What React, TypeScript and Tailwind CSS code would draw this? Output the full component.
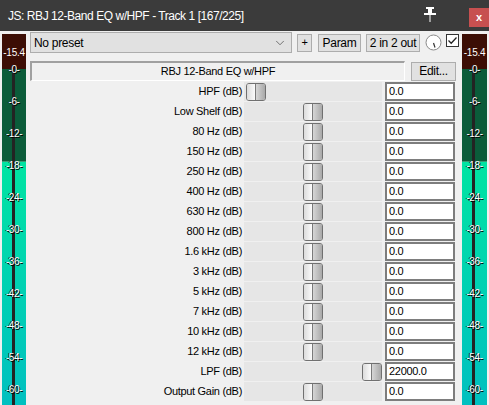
import { ChevronDown } from "lucide-react";

const marks = ["-0-", "-6-", "-12-", "-18-", "-24-", "-30-", "-36-", "-42-", "-48-", "-54-", "-60-"];

type Pos = "left" | "center" | "right";

const rows: { label: string; value: string; pos: Pos }[] = [
  { label: "HPF (dB)", value: "0.0", pos: "left" },
  { label: "Low Shelf (dB)", value: "0.0", pos: "center" },
  { label: "80 Hz (dB)", value: "0.0", pos: "center" },
  { label: "150 Hz (dB)", value: "0.0", pos: "center" },
  { label: "250 Hz (dB)", value: "0.0", pos: "center" },
  { label: "400 Hz (dB)", value: "0.0", pos: "center" },
  { label: "630 Hz (dB)", value: "0.0", pos: "center" },
  { label: "800 Hz (dB)", value: "0.0", pos: "center" },
  { label: "1.6 kHz (dB)", value: "0.0", pos: "center" },
  { label: "3 kHz (dB)", value: "0.0", pos: "center" },
  { label: "5 kHz (dB)", value: "0.0", pos: "center" },
  { label: "7 kHz (dB)", value: "0.0", pos: "center" },
  { label: "10 kHz (dB)", value: "0.0", pos: "center" },
  { label: "12 kHz (dB)", value: "0.0", pos: "center" },
  { label: "LPF (dB)", value: "22000.0", pos: "right" },
  { label: "Output Gain (dB)", value: "0.0", pos: "center" },
];

const Meter = ({ className }: { className?: string }) => (
  <div className={`relative flex h-full w-[24px] shrink-0 flex-col ${className ?? ""}`}>
    <div className="flex h-[35px] items-center justify-center bg-[#3c0e05] pt-[2px] text-[10px] tracking-[-0.3px] text-white">
      -15.4
    </div>
    <div className="h-[92px] bg-[#0b5c3a]" />
    <div className="h-px bg-[#3a9a74]" />
    <div className="flex-1 bg-gradient-to-b from-[#00e4a2] to-[#00bfc0]" />
    <div className="absolute bottom-0 left-[10px] top-[35px] w-[3px] bg-[#232323]" />
    <div className="absolute left-0 right-0 top-[19px] flex flex-col">
      {marks.map((m) => (
        <div
          key={m}
          className="flex h-[32px] items-center justify-center text-[10px] tracking-[-0.4px] text-white [text-shadow:1px_1px_0_#000,-1px_0_0_#222]"
        >
          {m}
        </div>
      ))}
    </div>
  </div>
);

const Thumb = () => (
  <div className="flex h-[18px] w-[20px] overflow-hidden rounded-[3px] border border-[#707070]">
    <div className="w-1/2 border-r border-[#7a7a7a] bg-gradient-to-r from-[#dcdcdc] to-[#fbfbfb]" />
    <div className="w-1/2 bg-gradient-to-r from-[#d6d6d6] to-[#a9a9a9]" />
  </div>
);

const Row = ({ label, value, pos }: { label: string; value: string; pos: Pos }) => (
  <div className="flex h-[19px] items-center">
    <div className="w-[214px] pr-[2px] text-right">{label}</div>
    <div
      className={`flex h-full w-[138px] items-center bg-[#e6e6e6] ${
        pos === "left" ? "justify-start pl-[2px]" : pos === "right" ? "justify-end" : "justify-center"
      }`}
    >
      <Thumb />
    </div>
    <div className="ml-[3px] flex h-full w-[70px] items-center border-2 border-[#7d7d7d] bg-white pl-[2px]">
      {value}
    </div>
  </div>
);

const Btn = ({ children, className }: { children: React.ReactNode; className?: string }) => (
  <div
    className={`flex h-[18px] items-center justify-center border border-[#adadad] bg-[#e1e1e1] ${className ?? ""}`}
  >
    {children}
  </div>
);

export default function App() {
  return (
    <div className="flex h-[405px] w-[489px] flex-col overflow-hidden bg-[#f0f0f0] font-['Liberation_Sans',Arial,sans-serif] text-[11px] tracking-[-0.3px] text-black">
      {/* title bar */}
      <div className="flex h-[31px] shrink-0 items-center bg-[#3b3b3b] pl-[8px] text-white">
        <span className="flex-1 text-[12px] tracking-[-0.45px]">JS: RBJ 12-Band EQ w/HPF - Track 1 [167/225]</span>
        <svg width="14" height="15" viewBox="0 0 14 15" className="mr-[32px] mt-[-2px]">
          <rect x="3" y="0" width="8" height="2" fill="#fff" />
          <rect x="5" y="2" width="4" height="5" fill="#fff" />
          <rect x="1" y="6" width="12" height="2" fill="#fff" />
          <rect x="6.5" y="8" width="1" height="7" fill="#fff" />
        </svg>
        <div className="mt-[8px] flex h-[19px] w-[20px] items-center justify-center self-start bg-[#c75050] text-[11px] font-bold leading-none text-white">
          x
        </div>
      </div>

      {/* body */}
      <div className="flex min-h-0 flex-1">
        <Meter className="ml-[2px] mt-[3px]" />

        <div className="ml-[4px] flex w-[429px] shrink-0 flex-col">
          {/* toolbar */}
          <div className="mt-[1px] flex h-[21px] items-center">
            <div className="flex h-[21px] w-[262px] items-center border border-[#adadad] bg-[#e1e1e1] pl-[3px] text-[12px]">
              <span className="flex-1">No preset</span>
              <ChevronDown size={14} strokeWidth={1.2} className="mr-[4px] text-[#444]" />
            </div>
            <Btn className="ml-[5px] w-[15px]">+</Btn>
            <Btn className="ml-[6px] w-[43px] text-[12px]">Param</Btn>
            <Btn className="ml-[5px] w-[54px] text-[12px]">2 in 2 out</Btn>
            <svg width="17" height="17" viewBox="0 0 17 17" className="ml-[5px]">
              <circle cx="8.5" cy="8.5" r="7.5" fill="#fff" stroke="#8a8a8a" strokeWidth="1" />
              <line x1="8.5" y1="9" x2="10" y2="13.5" stroke="#333" strokeWidth="1.2" />
            </svg>
            <div className="mb-[4px] ml-[4px] flex h-[13px] w-[13px] items-center justify-center border border-[#333] bg-white">
              <svg width="11" height="11" viewBox="0 0 11 11">
                <path d="M1.5 5.5 L4.2 8.2 L9.5 2.5" fill="none" stroke="#222" strokeWidth="1.3" />
              </svg>
            </div>
          </div>

          {/* name + edit */}
          <div className="mt-[8px] flex h-[20px] items-center">
            <div className="flex h-full w-[375px] items-center justify-center border-b border-l-2 border-r border-t-2 border-b-white border-l-[#a0a0a0] border-r-white border-t-[#a0a0a0] text-[11px]">
              RBJ 12-Band EQ w/HPF
            </div>
            <Btn className="ml-[6px] h-[19px] w-[45px] text-[12px]">Edit...</Btn>
          </div>

          {/* params */}
          <div className="mt-px flex flex-col gap-px">
            {rows.map((r) => (
              <Row key={r.label} {...r} />
            ))}
          </div>
        </div>

        <Meter className="ml-[3px] mt-[3px] w-[25px]" />
      </div>
    </div>
  );
}
